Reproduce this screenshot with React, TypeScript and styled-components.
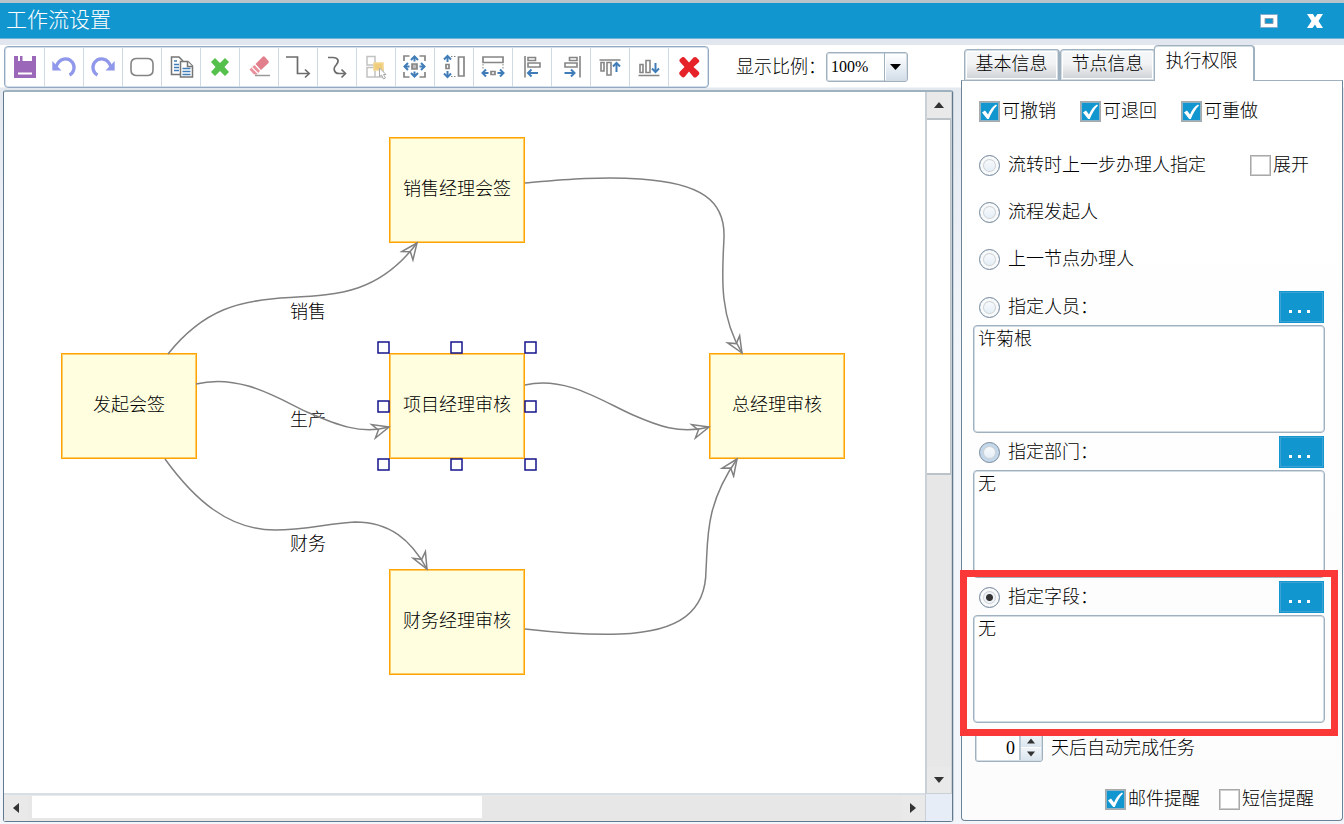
import React from 'react';
import styled, { createGlobalStyle, css } from 'styled-components';

const blue = '#1296cf';
const line = '#9fb0bf';
const softLine = '#d3dbe3';
const grey = '#858585';
const arrowBlue = '#3f7cb8';

const GlobalStyle = createGlobalStyle`
  * { box-sizing: border-box; }
  body { margin: 0; background: #f3f6fa; }
  body, button, input, select, textarea {
    font-family: "Liberation Serif", "Noto Sans CJK SC", serif;
    font-size: 18px;
    font-weight: 300;
    line-height: 24px;
    color: #000;
  }
  button { padding: 0; cursor: pointer; }
`;

const Window = styled.div`
  display: flex;
  flex-direction: column;
  min-height: 100vh;
  border-top: 3px solid #b9c3ca;
`;

const TitleBar = styled.header`
  display: flex;
  align-items: center;
  justify-content: space-between;
  height: 36px;
  padding: 0 20px 0 6px;
  background: ${blue};
  border-bottom: 1px solid #6fb4d8;
`;

const Title = styled.h1`
  margin: 0;
  padding-bottom: 2px;
  font-size: 21px;
  font-weight: 300;
  color: #fff;
`;

const TitleActions = styled.div`
  display: flex;
  gap: 28px;
`;

const TitleButton = styled.button`
  display: flex;
  width: 18px;
  height: 18px;
  border: 0;
  background: none;
`;

const Body = styled.div`
  display: flex;
  flex: 1;
  border-top: 6px solid #e2e7ef;
  background: linear-gradient(#fff 42px, #e4e9f0 43px, #f2f6fb 300px);
`;

const Main = styled.main`
  display: flex;
  flex-direction: column;
  flex: 1;
  min-width: 0;
  padding: 1px 0 2px 3px;
`;

const TopRow = styled.div`
  display: flex;
  align-items: center;
  height: 44px;
  padding: 0 0 2px 1px;
`;

const Toolbar = styled.div`
  display: flex;
  flex: none;
  height: 42px;
  padding-left: 1px;
  border: 1px solid #92a9c1;
  border-radius: 4px;
  background: #fff;
  box-shadow: inset 0 0 0 1px #d5dfe9;
`;

const ToolButton = styled.button`
  display: flex;
  align-items: center;
  justify-content: center;
  width: 39px;
  border: 0;
  border-right: 1px solid #cfdae4;
  background: none;
  &:last-child { border-right: 0; }
`;

const ZoomLabel = styled.label`
  display: flex;
  align-items: center;
  margin-left: 27px;
  white-space: nowrap;
`;

const SelectFrame = styled.span`
  display: flex;
  position: relative;
  width: 82px;
  height: 30px;
  border: 1px solid ${line};
  border-radius: 3px;
  background: #fff;
  box-shadow: inset 0 0 0 1px ${softLine};
`;

const ZoomSelect = styled.select`
  appearance: none;
  width: 100%;
  padding: 0 4px;
  border: 0;
  background: linear-gradient(#fff, #d3deea) 59px 1px / 20px 26px no-repeat, linear-gradient(${line}, ${line}) 57px 0 / 1px 100% no-repeat;
  font-size: 16px;
  outline: 0;
`;

const SelectArrow = styled.svg`
  position: absolute;
  right: 6px;
  top: 11px;
  pointer-events: none;
`;

const CanvasFrame = styled.section`
  display: grid;
  grid-template-columns: 1fr 27px;
  grid-template-rows: 1fr 28px;
  flex: 1;
  border: 1px solid #62788c;
  border-top: 2px solid ${line};
  border-radius: 3px;
  background: #fff;
  box-shadow: 1px 0 0 #c8d3dd;
`;

const Canvas = styled.div`
  position: relative;
  min-width: 0;
  min-height: 660px;
  overflow: hidden;
`;

const EdgeLayer = styled.svg`
  position: absolute;
  inset: 0;
  width: 100%;
  height: 100%;
`;

const FlowNode = styled.div<{ $x: number; $y: number }>`
  position: absolute;
  left: ${(p) => p.$x}px;
  top: ${(p) => p.$y}px;
  display: flex;
  align-items: center;
  justify-content: center;
  width: 136px;
  height: 106px;
  padding-bottom: 2px;
  border: 1px solid #ffa500;
  background: #ffffe0;
  box-shadow: inset 0 0 0 1px #ffcb66;
  white-space: nowrap;
`;

const EdgeLabel = styled.span<{ $x: number; $y: number }>`
  position: absolute;
  left: ${(p) => p.$x}px;
  top: ${(p) => p.$y}px;
  white-space: nowrap;
`;

const ScrollBar = styled.div<{ $vertical?: boolean }>`
  display: flex;
  flex-direction: ${(p) => (p.$vertical ? 'column' : 'row')};
  background: #e7e7e7;
  border: 0 solid #c9d0d6;
  ${(p) => (p.$vertical ? css`border-left-width: 2px; border-right-width: 1px;` : css`border-top-width: 2px; border-color: #d8dfe5;`)}
`;

const ScrollButton = styled.button`
  display: flex;
  align-items: center;
  justify-content: center;
  flex: none;
  min-width: 24px;
  height: 26px;
  border: 0;
  background: #e9e9e9;
`;

const VerticalTrack = styled.div`
  flex: 1;
`;

const VerticalThumb = styled.div`
  height: 55%;
  border: 2px solid #bcc3c8;
  border-width: 2px 1px 2px 0;
  background: #fff;
`;

const HorizontalTrack = styled.div`
  flex: 1;
  padding: 1px 4px 3px;
`;

const HorizontalThumb = styled.div`
  width: 52%;
  height: 100%;
  background: #fff;
`;

const Corner = styled.div`
  border: 1px solid #c9d0d6;
  border-width: 1px 0 0 1px;
  background: #e7edf6;
`;

const Side = styled.aside`
  display: flex;
  flex-direction: column;
  flex: none;
  width: 391px;
  padding: 0 1px 3px 8px;
`;

const Tabs = styled.div`
  display: flex;
  align-items: flex-end;
  height: 36px;
  padding-left: 3px;
`;

const Tab = styled.button<{ $active?: boolean }>`
  width: 96px;
  height: 32px;
  padding-bottom: 2px;
  border: 1px solid ${line};
  border-right-width: 2px;
  border-radius: 4px 4px 0 0;
  background: linear-gradient(#f6f7f8, #f2f3f4 45%, #cdd1d5);
  box-shadow: inset 0 0 0 1px ${softLine}, inset 0 0 0 2px #fff;
  ${(p) =>
    p.$active &&
    css`
      position: relative;
      z-index: 1;
      width: 101px;
      height: 36px;
      margin-left: -2px;
      padding: 0 5px 6px 0;
      border-bottom: 0;
      background: #fff;
      box-shadow: inset 0 1px 0 ${softLine};
    `}
`;

const Panel = styled.form`
  display: flex;
  flex-direction: column;
  flex: 1;
  margin-top: -1px;
  padding: 18px 17px 9px 11px;
  border: 1px solid #6c8296;
  border-top-color: ${line};
  border-radius: 0 0 4px 4px;
  background: linear-gradient(#fff, #fcfcfd);
`;

const PermissionRow = styled.div`
  display: flex;
  gap: 24px;
  height: 24px;
  margin-bottom: 19px;
  padding-left: 6px;
`;

const CheckLabel = styled.label`
  display: flex;
  align-items: center;
  gap: 2px;
  white-space: nowrap;
`;

const CheckFrame = styled.span`
  display: flex;
  position: relative;
`;

const CheckInput = styled.input`
  appearance: none;
  width: 21px;
  height: 21px;
  margin: 0;
  border: 1px solid #a9a9a9;
  background: #fff;
  box-shadow: inset 0 0 0 1px #cfcfcf;
  &:checked { background: ${blue}; box-shadow: inset 0 0 0 1px #8fb3c4; }
  & + svg { visibility: hidden; }
  &:checked + svg { visibility: visible; }
`;

const CheckMark = styled.svg`
  position: absolute;
  inset: 0;
  pointer-events: none;
`;

const RadioRow = styled.div`
  display: flex;
  align-items: center;
  justify-content: space-between;
  height: 47px;
  padding: 0 16px 1px 6px;
`;

const RadioLabel = styled.label`
  display: flex;
  align-items: center;
  gap: 8px;
  white-space: nowrap;
`;

const RadioInput = styled.input<{ $hot?: boolean }>`
  appearance: none;
  width: 21px;
  height: 21px;
  margin: 1px 0 0;
  border: 1px solid #72869a;
  border-radius: 50%;
  background: linear-gradient(#fff, #dde9f4) padding-box;
  box-shadow: inset 0 0 0 3px ${(p) => (p.$hot ? '#c3d7ea' : '#f7f9fb')}, inset 0 0 0 4px #cfd2d5;
  &:checked {
    background: radial-gradient(circle, #333 3px, #eef3f8 4px);
  }
`;

const Group = styled.section<{ $marked?: boolean }>`
  position: relative;
  height: 145px;
  ${(p) =>
    p.$marked &&
    css`
      &::after {
        content: '';
        position: absolute;
        inset: -11px -13px -10px;
        border: 7px solid #fb3838;
        pointer-events: none;
        z-index: 2;
      }
    `}
`;

const Groups = styled.div`
  margin-top: 8px;
`;

const GroupHeader = styled.div`
  display: flex;
  align-items: center;
  justify-content: space-between;
  height: 32px;
  margin-bottom: 2px;
  padding: 0 1px 0 6px;
`;

const MoreButton = styled.button`
  display: flex;
  align-items: center;
  justify-content: center;
  gap: 6px;
  width: 45px;
  height: 32px;
  padding: 8px 4px 0 0;
  border: 1px solid ${blue};
  background: ${blue};
  box-shadow: inset 0 0 0 1px #3ea3d2;
`;

const Dot = styled.i`
  width: 3px;
  height: 3px;
  background: #fff;
`;

const ValueBox = styled.textarea`
  display: block;
  width: 100%;
  height: 108px;
  padding: 1px 4px;
  border: 1px solid ${line};
  border-radius: 4px;
  background: #fff;
  box-shadow: inset 0 0 0 1px ${softLine};
  resize: none;
  outline: 0;
`;

const SpinRow = styled.div`
  display: flex;
  align-items: center;
  gap: 8px;
  margin-top: 7px;
  padding-left: 2px;
`;

const Spinner = styled.span`
  display: flex;
  width: 68px;
  height: 29px;
  padding: 1px;
  border: 1px solid ${line};
  border-radius: 3px;
  background: #fff;
  box-shadow: inset 0 0 0 1px ${softLine};
`;

const SpinInput = styled.input`
  flex: 1;
  min-width: 0;
  padding: 0 4px 0 0;
  border: 0;
  border-right: 2px solid #b9c7d3;
  background: none;
  text-align: right;
  appearance: textfield;
  outline: 0;
  &::-webkit-inner-spin-button { display: none; }
`;

const SpinButtons = styled.span`
  display: flex;
  flex-direction: column;
  width: 20px;
  gap: 1px;
`;

const SpinButton = styled.button`
  display: flex;
  align-items: center;
  justify-content: center;
  flex: 1;
  border: 0;
  background: linear-gradient(#f0f4f8, #dbe5ee);
`;

const RemindRow = styled.div`
  display: flex;
  justify-content: flex-end;
  gap: 19px;
  margin-top: auto;
  padding-right: 11px;
`;

type Dir = 'up' | 'down' | 'left' | 'right';
const turn: Record<Dir, number> = { up: 0, right: 90, down: 180, left: 270 };

/* Short arrow whose tip sits at x, y. */
const Arrow = ({ x, y, dir, len = 7 }: { x: number; y: number; dir: Dir; len?: number }) => (
  <g transform={`translate(${x} ${y}) rotate(${turn[dir]})`} stroke={arrowBlue} strokeWidth="2" fill="none">
    <path d={`M0 ${len}V1`} />
    <path d="M-3.500 4.500L0 1L3.500 4.500" />
  </g>
);

const Caret = ({ dir, size = 10 }: { dir: Dir; size?: number }) => (
  <svg width={size} height={size} viewBox="0 0 10 10" aria-hidden>
    <path d="M0 8L5 2L10 8Z" fill="#333" transform={`rotate(${turn[dir]} 5 5)`} />
  </svg>
);

const undoShape = (
  <g>
    <path d="M6 14C9 5 18 3.500 22.500 9.500C25.500 14 24 19.500 19.500 22" fill="none" stroke="#8f98ea" strokeWidth="3.200" />
    <path d="M2.300 8L11.500 17.500H2.300Z" fill="#8f98ea" />
  </g>
);

const tools: { name: string; art: React.ReactNode }[] = [
  {
    name: '保存',
    art: (
      <>
        <path d="M3 3H25V25H3Z" fill="#9b68b9" />
        <path d="M7 2.500H21V10H7Z" fill="#fff" />
        <path d="M7 8H21V10H7ZM9 3H11.500V9H9ZM5.500 3H7V9H5.500ZM21 3h1v7h-1z" fill="#9b68b9" />
        <path d="M7 19.500H21V21.500H7Z" fill="#fff" />
      </>
    ),
  },
  { name: '撤销', art: undoShape },
  { name: '重做', art: <g transform="translate(28 0) scale(-1 1)">{undoShape}</g> },
  { name: '节点', art: <path d="M8 5.500H20Q25 6 25 11V17Q25 22 20 22.500H8Q3 22 3 17V11Q3 6 8 5.500Z" fill="#fff" stroke="#858585" strokeWidth="1.600" /> },
  {
    name: '复制',
    art: (
      <g fill="#fff" stroke="#757575" strokeWidth="1.500">
        <path d="M4.500 4H12L15.500 7.500V21.500H4.500Z" />
        <path d="M7 8h3M7 11.500h5M7 14.500h5M7 17.500h5" stroke={arrowBlue} />
        <path d="M13.500 8.500H21L25.500 13V24H13.500Z" />
        <path d="M20.500 8.500V13.500H25.500" />
        <path d="M15.500 15.500h8M15.500 18.500h8M15.500 21.500h8" stroke={arrowBlue} />
      </g>
    ),
  },
  { name: '删除', art: <path d="M5 9L9 5L14 10L19 5L23 9L18.500 14L23 19L19 23L14 18L9 23L5 19L9.500 14Z" fill="#55c04b" /> },
  {
    name: '擦除',
    art: (
      <>
        <path d="M10.500 11L18 3.500Q19 3 20 4L23.500 8Q24 9 23.500 10L16 17Z" fill="#e27f8d" />
        <path d="M9.500 12L15 18L12 21.500H9L4.500 16.500Z" fill="#e9909b" />
        <path d="M7 14.500L13 20.500" stroke="#fff" strokeWidth="1.200" />
        <path d="M10 22.500H25" stroke="#999" strokeWidth="1.500" />
      </>
    ),
  },
  {
    name: '折线',
    art: (
      <g fill="none" stroke="#6c6c6c" strokeWidth="1.700">
        <path d="M2 4H13.500V20.500H25" />
        <path d="M21 16.500L25.200 20.500L21 24.500" />
      </g>
    ),
  },
  {
    name: '曲线',
    art: (
      <g fill="none" stroke="#6c6c6c" strokeWidth="1.700">
        <path d="M5 4.500H10C15 4.500 16.500 8 13.500 11.500C9.500 15.500 11 20.500 16 20.500H22" />
        <path d="M18.500 16.500L22.500 20.500L18.500 24.500" />
      </g>
    ),
  },
  {
    name: '选择',
    art: (
      <g fill="#fff" stroke="#c2c2c2" strokeWidth="1.500">
        <path d="M5 3.500H13V12H5ZM5 14.500H13V24H5ZM13 15.500H21V24H13Z" />
        <path d="M12 10H21V17H12Z" fill="#f0cd7c" stroke="#f3d690" />
        <path d="M17.500 15V23.500L19.500 22L21.500 26L23.500 25L21.500 21.500H24Z" stroke="#aaa" strokeWidth="1" />
      </g>
    ),
  },
  {
    name: '居中',
    art: (
      <>
        <path d="M3 8V3H8.500M18.500 3H24V8M24 19V24H18.500M8.500 24H3V19" fill="none" stroke={grey} strokeWidth="1.700" />
        <path d="M11 11H16V16H11Z" fill="#bbb" stroke={grey} strokeWidth="1.700" />
        <Arrow x={13.500} y={2.500} dir="up" len={6} />
        <Arrow x={13.500} y={24.500} dir="down" len={6} />
        <Arrow x={2.500} y={13.500} dir="left" len={6} />
        <Arrow x={24.500} y={13.500} dir="right" len={6} />
      </>
    ),
  },
  {
    name: '等高',
    art: (
      <>
        <path d="M18.500 4H24V23H18.500ZM6 11.500H9V15.500H6Z" fill="none" stroke={grey} strokeWidth="1.700" />
        <path d="M11 3.500H17M11 23.500H17" stroke={grey} strokeWidth="1" strokeDasharray="1.500 1.500" />
        <Arrow x={7.500} y={2} dir="up" />
        <Arrow x={7.500} y={25} dir="down" />
      </>
    ),
  },
  {
    name: '等宽',
    art: (
      <>
        <path d="M4 4H24V9.500H4ZM12 18.500H16V21.500H12Z" fill="none" stroke={grey} strokeWidth="1.700" />
        <path d="M4 11V17M24 11V17" stroke={grey} strokeWidth="1" strokeDasharray="1.500 1.500" />
        <Arrow x={2.500} y={20} dir="left" />
        <Arrow x={25.500} y={20} dir="right" />
      </>
    ),
  },
  {
    name: '左对齐',
    art: (
      <>
        <path d="M7 3V24.500M10 4.500H17.500V7.500H10ZM10 10H22V14H10Z" fill="none" stroke={grey} strokeWidth="1.600" />
        <Arrow x={9} y={20} dir="left" len={11} />
      </>
    ),
  },
  {
    name: '右对齐',
    art: (
      <>
        <path d="M23 3V24.500M20 4.500H12.500V7.500H20ZM20 10H8V14H20Z" fill="none" stroke={grey} strokeWidth="1.600" />
        <Arrow x={18.500} y={20} dir="right" len={11} />
      </>
    ),
  },
  {
    name: '顶对齐',
    art: (
      <>
        <path d="M3.500 7H24.500M5 9.500H8V18H5ZM11 9.500H15V22H11Z" fill="none" stroke={grey} strokeWidth="1.600" />
        <Arrow x={20.500} y={9} dir="up" len={10} />
      </>
    ),
  },
  {
    name: '底对齐',
    art: (
      <>
        <path d="M3.500 22.500H24.500M5 11.500H8V19.500H5ZM11 7.500H15V19.500H11Z" fill="none" stroke={grey} strokeWidth="1.600" />
        <Arrow x={20.500} y={20} dir="down" len={10} />
      </>
    ),
  },
  {
    name: '清空',
    art: (
      <path
        d="M5 9Q3.500 7.500 5 6L7.500 4Q9 3.500 10 5L14 9.500L18.500 4.500Q20 3.500 21.500 4.500L24 7Q25 8.500 23.500 9.500L18.500 14L23.500 18.500Q25 20 24 21.500L21.500 24Q20 25 18.500 24L14 18.500L10 23.500Q8.500 25 7 24L4.500 21.500Q3.500 20 5 18.500L9.500 14Z"
        fill="#e52329"
      />
    ),
  },
];

const nodes = [
  { text: '销售经理会签', x: 385, y: 45 },
  { text: '发起会签', x: 57, y: 261 },
  { text: '项目经理审核', x: 385, y: 261 },
  { text: '总经理审核', x: 705, y: 261 },
  { text: '财务经理审核', x: 385, y: 477 },
];

const edges = [
  'M164 262C200 217 236 208 286 205.500C336 203 376 200 413 151',
  'M192 292C236 281 275 307 303 320C331 332 356 343 385 335',
  'M161 367C190 407 224 438 271 438C301 438 326 431 351 430C386 430 407 448 423 477',
  'M521 91C556 88 596 84 636 87C696 91 721 108 720 145C719 176 713 220 738 261',
  'M521 293C562 283 601 311 629 323C652 333 676 343 705 335',
  'M521 537C556 541 586 543 616 542C676 540 702 519 702 478C704 446 701 413 733 367',
];

const edgeLabels = [
  { text: '销售', x: 286, y: 208 },
  { text: '生产', x: 286, y: 316 },
  { text: '财务', x: 286, y: 440 },
];

const handleXs = [374, 447, 521];
const handleYs = [250, 309, 367];
const handles = handleYs.flatMap((y, r) => handleXs.filter((_, c) => !(r === 1 && c === 1)).map((x) => ({ x, y })));

const Check = ({ text, checked }: { text: string; checked?: boolean }) => (
  <CheckLabel>
    <CheckFrame>
      <CheckInput type="checkbox" defaultChecked={checked} />
      <CheckMark width="21" height="21" viewBox="0 0 21 21" aria-hidden>
        <path d="M3 11.500L6 9.500L9 13.500C11 9 13.500 5.500 17 3.500L18 4.500C14 8.500 12 13 9.800 18H8.200Z" fill="#fff" />
      </CheckMark>
    </CheckFrame>
    {text}
  </CheckLabel>
);

const Radio = ({ text, checked, hot }: { text: string; checked?: boolean; hot?: boolean }) => (
  <RadioLabel>
    <RadioInput type="radio" name="handler" defaultChecked={checked} $hot={hot} />
    {text}
  </RadioLabel>
);

const AssignGroup = (p: { text: string; value: string; checked?: boolean; hot?: boolean; marked?: boolean }) => (
  <Group $marked={p.marked}>
    <GroupHeader>
      <Radio text={`${p.text}：`} checked={p.checked} hot={p.hot} />
      <MoreButton type="button" aria-label={`选择${p.text}`}>
        <Dot />
        <Dot />
        <Dot />
      </MoreButton>
    </GroupHeader>
    <ValueBox aria-label={p.text} defaultValue={p.value} />
  </Group>
);

export default function App() {
  return (
    <Window>
      <GlobalStyle />
      <TitleBar>
        <Title>工作流设置</Title>
        <TitleActions>
          <TitleButton type="button" aria-label="还原">
            <svg width="18" height="18" viewBox="0 0 18 18">
              <path d="M.5 2.500H17.500V15.500H.5Z" fill="#fff" stroke="#83aecb" />
              <path d="M5 6.500H13V11.500H5Z" fill={blue} stroke="#8a9eb0" />
            </svg>
          </TitleButton>
          <TitleButton type="button" aria-label="关闭">
            <svg width="18" height="18" viewBox="0 0 18 18">
              <path d="M1 2H7L9 5.500L11.500 2H17L12.500 9L17 16H11L9 12.500L6.500 16H1L5.500 9Z" fill="#fff" />
            </svg>
          </TitleButton>
        </TitleActions>
      </TitleBar>
      <Body>
        <Main>
          <TopRow>
            <Toolbar role="toolbar" aria-label="工具栏">
              {tools.map((t) => (
                <ToolButton key={t.name} type="button" aria-label={t.name}>
                  <svg width="28" height="28" viewBox="0 0 28 28" aria-hidden>
                    {t.art}
                  </svg>
                </ToolButton>
              ))}
            </Toolbar>
            <ZoomLabel>
              显示比例：
              <SelectFrame>
                <ZoomSelect defaultValue="100%">
                  <option>50%</option>
                  <option>100%</option>
                  <option>200%</option>
                </ZoomSelect>
                <SelectArrow width="11" height="6" viewBox="0 0 11 6" aria-hidden>
                  <path d="M0 0H11L5.500 6Z" fill="#000" />
                </SelectArrow>
              </SelectFrame>
            </ZoomLabel>
          </TopRow>
          <CanvasFrame>
            <Canvas>
              {nodes.map((n) => (
                <FlowNode key={n.text} $x={n.x} $y={n.y}>
                  {n.text}
                </FlowNode>
              ))}
              {edgeLabels.map((l) => (
                <EdgeLabel key={l.text} $x={l.x} $y={l.y}>
                  {l.text}
                </EdgeLabel>
              ))}
              <EdgeLayer aria-hidden>
                <defs>
                  <marker id="head" markerUnits="userSpaceOnUse" markerWidth="22" markerHeight="20" refX="18" refY="10" orient="auto">
                    <path d="M18 10L2 3L7 10L2 17Z" fill="none" stroke="#808080" strokeWidth="1.500" />
                  </marker>
                </defs>
                {edges.map((d) => (
                  <path key={d} d={d} fill="none" stroke="#808080" strokeWidth="1.500" markerEnd="url(#head)" />
                ))}
                {handles.map((h) => (
                  <rect key={`${h.x}-${h.y}`} x={h.x} y={h.y} width="11" height="11" fill="#fff" stroke="#14148c" strokeWidth="1.500" />
                ))}
              </EdgeLayer>
            </Canvas>
            <ScrollBar $vertical>
              <ScrollButton type="button" aria-label="向上">
                <Caret dir="up" />
              </ScrollButton>
              <VerticalTrack>
                <VerticalThumb />
              </VerticalTrack>
              <ScrollButton type="button" aria-label="向下">
                <Caret dir="down" />
              </ScrollButton>
            </ScrollBar>
            <ScrollBar>
              <ScrollButton type="button" aria-label="向左">
                <Caret dir="left" />
              </ScrollButton>
              <HorizontalTrack>
                <HorizontalThumb />
              </HorizontalTrack>
              <ScrollButton type="button" aria-label="向右">
                <Caret dir="right" />
              </ScrollButton>
            </ScrollBar>
            <Corner />
          </CanvasFrame>
        </Main>
        <Side>
          <Tabs role="tablist">
            <Tab type="button" role="tab">基本信息</Tab>
            <Tab type="button" role="tab">节点信息</Tab>
            <Tab type="button" role="tab" aria-selected $active>执行权限</Tab>
          </Tabs>
          <Panel>
            <PermissionRow>
              <Check text="可撤销" checked />
              <Check text="可退回" checked />
              <Check text="可重做" checked />
            </PermissionRow>
            <RadioRow>
              <Radio text="流转时上一步办理人指定" />
              <Check text="展开" />
            </RadioRow>
            <RadioRow>
              <Radio text="流程发起人" />
            </RadioRow>
            <RadioRow>
              <Radio text="上一节点办理人" />
            </RadioRow>
            <Groups>
              <AssignGroup text="指定人员" value="许菊根" />
              <AssignGroup text="指定部门" value="无" hot />
              <AssignGroup text="指定字段" value="无" checked marked />
            </Groups>
            <SpinRow>
              <Spinner>
                <SpinInput id="days" type="number" defaultValue={0} />
                <SpinButtons>
                  <SpinButton type="button" aria-label="增加">
                    <Caret dir="up" size={8} />
                  </SpinButton>
                  <SpinButton type="button" aria-label="减少">
                    <Caret dir="down" size={8} />
                  </SpinButton>
                </SpinButtons>
              </Spinner>
              <label htmlFor="days">天后自动完成任务</label>
            </SpinRow>
            <RemindRow>
              <Check text="邮件提醒" checked />
              <Check text="短信提醒" />
            </RemindRow>
          </Panel>
        </Side>
      </Body>
    </Window>
  );
}
